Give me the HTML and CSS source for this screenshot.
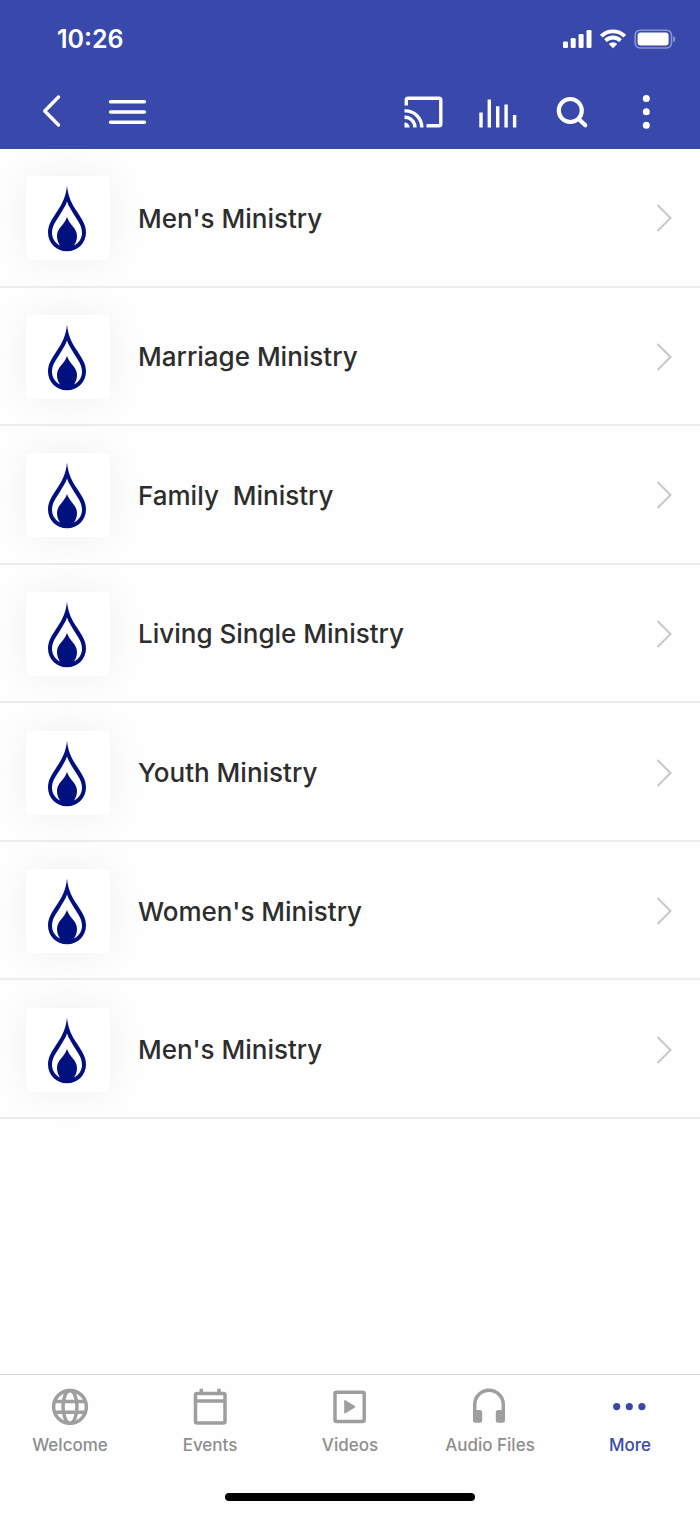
FILE: index.html
```html
<!DOCTYPE html>
<html lang="en">
<head>
<meta charset="utf-8">
<meta name="viewport" content="width=device-width, initial-scale=1.0">
<title>Ministries</title>
<link rel="stylesheet" href="styles.css">
</head>
<body>
  <!-- shared shapes for the list rows -->
  <svg class="sprite" aria-hidden="true">
    <symbol id="flame" viewBox="0 0 84 84">
      <path fill="#00117f" fill-rule="evenodd" d="M41 9.500C40 21 36 28 31 35.500C26 43 22 49 22 56.500C22 67 30 75.300 41 75.300C52 75.300 60 67 60 56.500C60 49 56 43 51 35.500C46 28 42 21 41 9.500ZM41 25.500C39.500 30 36.500 34.500 33.500 39.500C29.500 46 26 50 26 57C26 62 29 67 34 69.500C32 66.500 31 63.500 31 60C31 52 38.500 49 41 41C43.500 49 51 52 51 60C51 63.500 50 66.500 48 69.500C53 67 56 62 56 57C56 50 52.500 46 48.500 39.500C45.500 34.500 42.500 30 41 25.500Z"/>
    </symbol>
    <symbol id="chevron" viewBox="0 0 16 28">
      <path fill="none" stroke="#c7c7cc" stroke-width="2" d="M1.500 1L14.500 14L1.500 27"/>
    </symbol>
  </svg>

  <header class="header">
    <div class="status">
      <span class="time">10:26</span>
      <div class="status-icons">
        <svg width="30" height="20" viewBox="0 0 30 20" fill="#fff">
          <rect x="1" y="12.500" width="5" height="6.500" rx="1.300"/>
          <rect x="8.700" y="9" width="5" height="10" rx="1.300"/>
          <rect x="16.600" y="5" width="5" height="14" rx="1.300"/>
          <rect x="24.500" y="1" width="5" height="18" rx="1.300"/>
        </svg>
        <svg width="26" height="20" viewBox="0 0 26 20">
          <path fill="none" stroke="#fff" stroke-width="3.800" d="M1.300 7.200A16.600 16.600 0 0 1 24.700 7.200M5.500 11.600A10.600 10.600 0 0 1 20.500 11.600"/>
          <path fill="#fff" d="M13 19.200L8.800 15A6 6 0 0 1 17.200 15Z"/>
        </svg>
        <svg width="42" height="20" viewBox="0 0 42 20">
          <rect x="1.200" y="1.200" width="36.300" height="17.800" rx="5" fill="none" stroke="#fff" stroke-opacity=".42" stroke-width="1.600"/>
          <rect x="3.600" y="3.600" width="31" height="13" rx="3" fill="#fff"/>
          <path fill="#fff" fill-opacity=".45" d="M39.200 7C41.900 8.200 41.900 12 39.200 13.200Z"/>
        </svg>
      </div>
    </div>
    <div class="toolbar">
      <button class="tool" aria-label="Back">
        <svg viewBox="0 0 40 40"><path d="M24.500 5L10.700 19L24.500 33"/></svg>
      </button>
      <button class="tool" aria-label="Menu">
        <svg viewBox="0 0 40 40"><path d="M2.500 9.700H36.500M2.500 20H36.500M2.500 30.200H36.500"/></svg>
      </button>
      <button class="tool tool-push" aria-label="Cast">
        <svg viewBox="0 0 40 40" class="flat">
          <path d="M2.300 13.500V8A1.800 1.800 0 0 1 4.100 6.200H35A1.800 1.800 0 0 1 36.800 8V32A1.800 1.800 0 0 1 35 33.800H22.500M.500 18.900A16.500 16.500 0 0 1 17.800 35.500M.500 25.200A10.200 10.200 0 0 1 11 35.500"/>
          <path class="solid" d="M.500 30.500A5 5 0 0 1 5.700 35.500H.500Z"/>
        </svg>
      </button>
      <button class="tool" aria-label="Now playing">
        <svg viewBox="0 0 40 40" class="flat"><path d="M3 20.500V35.500M11.300 7.500V35.500M19.700 14.200V35.500M28.100 12.500V35.500M36.600 23V35.500"/></svg>
      </button>
      <button class="tool" aria-label="Search">
        <svg viewBox="0 0 40 40" class="thick"><circle cx="18.300" cy="18.500" r="11.500"/><path d="M27 27.200L33.300 33.300"/></svg>
      </button>
      <button class="tool" aria-label="More options">
        <svg viewBox="0 0 40 40"><g class="solid"><circle cx="20.300" cy="6.400" r="3.500"/><circle cx="20.300" cy="19.800" r="3.500"/><circle cx="20.300" cy="33.200" r="3.500"/></g></svg>
      </button>
    </div>
  </header>

  <main>
    <ul class="list">
      <li><a class="item" href="#mens"><span class="thumb"><svg><use href="#flame"/></svg></span><span class="name">Men's Ministry</span><svg class="chevron"><use href="#chevron"/></svg></a></li>
      <li><a class="item" href="#marriage"><span class="thumb"><svg><use href="#flame"/></svg></span><span class="name">Marriage Ministry</span><svg class="chevron"><use href="#chevron"/></svg></a></li>
      <li><a class="item" href="#family"><span class="thumb"><svg><use href="#flame"/></svg></span><span class="name">Family  Ministry</span><svg class="chevron"><use href="#chevron"/></svg></a></li>
      <li><a class="item" href="#single"><span class="thumb"><svg><use href="#flame"/></svg></span><span class="name">Living Single Ministry</span><svg class="chevron"><use href="#chevron"/></svg></a></li>
      <li><a class="item" href="#youth"><span class="thumb"><svg><use href="#flame"/></svg></span><span class="name">Youth Ministry</span><svg class="chevron"><use href="#chevron"/></svg></a></li>
      <li><a class="item" href="#womens"><span class="thumb"><svg><use href="#flame"/></svg></span><span class="name">Women's Ministry</span><svg class="chevron"><use href="#chevron"/></svg></a></li>
      <li><a class="item" href="#mens-2"><span class="thumb"><svg><use href="#flame"/></svg></span><span class="name">Men's Ministry</span><svg class="chevron"><use href="#chevron"/></svg></a></li>
    </ul>
  </main>

  <footer class="footer">
    <nav class="tabs">
      <a class="tab" href="#welcome">
        <svg viewBox="0 0 40 40"><circle cx="20" cy="19.800" r="16.400"/><ellipse cx="20" cy="19.800" rx="7" ry="16.400"/><path d="M4.500 14.500H35.500M4.500 25.200H35.500"/></svg>
        <span>Welcome</span>
      </a>
      <a class="tab" href="#events">
        <svg viewBox="0 0 40 40"><rect x="5.500" y="6.500" width="29.500" height="29.500" rx="1.500"/><path d="M5.500 14H35M11.300 1.700V6.500M29 1.700V6.500"/></svg>
        <span>Events</span>
      </a>
      <a class="tab" href="#videos">
        <svg viewBox="0 0 40 40"><rect x="5" y="5.200" width="29.200" height="29.200" rx="1.500"/><path class="fill" d="M14.200 13.800Q14.200 12.600 15.400 13.200L24.900 19.100Q25.800 19.800 24.900 20.500L15.400 26.200Q14.200 26.800 14.200 25.600Z"/></svg>
        <span>Videos</span>
      </a>
      <a class="tab" href="#audio">
        <svg viewBox="0 0 40 40"><path d="M4.700 32V17.500A14.300 14.300 0 0 1 33.300 17.500V32"/><rect class="fill" x="3" y="23" width="9.200" height="12.800" rx="2.500"/><rect class="fill" x="25.800" y="23" width="9.200" height="12.800" rx="2.500"/></svg>
        <span>Audio Files</span>
      </a>
      <a class="tab active" href="#more">
        <svg viewBox="0 0 40 40"><g class="fill"><circle cx="6.700" cy="19.600" r="3.600"/><circle cx="19.300" cy="19.600" r="3.600"/><circle cx="31.900" cy="19.600" r="3.600"/></g></svg>
        <span>More</span>
      </a>
    </nav>
    <div class="home-bar"></div>
  </footer>
</body>
</html>
```
FILE: styles.css
```css
* {
  margin: 0;
  padding: 0;
  box-sizing: border-box;
}
body {
  font-family: Inter, "Liberation Sans", sans-serif;
  display: flex;
  flex-direction: column;
  min-height: 100vh;
  background-color: #fefefe;
  color: #2d2d2d;
}
svg {
  display: block;
}
a {
  color: inherit;
  text-decoration: none;
}
.sprite {
  position: absolute;
  width: 0;
  height: 0;
}

/* header */
.header {
  background-color: #3949ab;
  color: #fff;
}
.status {
  display: flex;
  justify-content: space-between;
  align-items: center;
  height: 74px;
  padding: 4px 24px 0 57px;
}
.time {
  font-size: 25px;
  font-weight: 600;
}
.status-icons {
  display: flex;
  gap: 8px;
}
.toolbar {
  display: flex;
  align-items: center;
  gap: 34px;
  height: 75px;
  padding: 0 34px;
}
.tool {
  width: 40px;
  height: 40px;
  border: 0;
  background: none;
  cursor: pointer;
}
.tool-push {
  margin-left: auto;
}
.tool svg {
  width: 40px;
  height: 40px;
  fill: none;
  stroke: #fff;
  stroke-width: 3.4;
  stroke-linecap: round;
  stroke-linejoin: round;
}
.tool .flat {
  stroke-linecap: butt;
}
.tool .thick {
  stroke-width: 4.2;
}
.tool .solid {
  fill: #fff;
  stroke: none;
}

/* list */
main {
  flex: 1;
}
.list {
  display: grid;
  grid-auto-rows: 1fr;
  min-height: 970px;
  list-style: none;
}
.item {
  display: flex;
  align-items: center;
  gap: 28px;
  height: 100%;
  padding: 2px 28px 0 26px;
  border-bottom: 2px solid #ededed;
}
.thumb {
  background-color: #fff;
  border-radius: 4px;
  box-shadow: 0 0 40px rgba(0, 0, 0, 0.06);
}
.thumb svg {
  width: 84px;
  height: 84px;
}
.name {
  flex: 1;
  font-size: 26px;
  font-weight: 500;
  white-space: pre-wrap;
}
.chevron {
  width: 16px;
  height: 28px;
}

/* bottom bar */
.footer {
  border-top: 1px solid #d4d4d4;
  padding-bottom: 14px;
}
.tabs {
  display: grid;
  grid-template-columns: repeat(5, 1fr);
  padding-top: 12px;
}
.tab {
  display: flex;
  flex-direction: column;
  align-items: center;
  gap: 8px;
  color: #8e8e8e;
  font-size: 17px;
  font-weight: 500;
  line-height: 20px;
}
.tab svg {
  width: 40px;
  height: 40px;
  fill: none;
  stroke: #9e9e9e;
  stroke-width: 3.5;
}
.tab .fill {
  fill: #9e9e9e;
  stroke: none;
}
.active {
  color: #3949ab;
}
.active .fill {
  fill: #3949ab;
}
.home-bar {
  width: 250px;
  height: 8px;
  margin: 38px auto 0;
  border-radius: 4px;
  background-color: #000;
}
```
